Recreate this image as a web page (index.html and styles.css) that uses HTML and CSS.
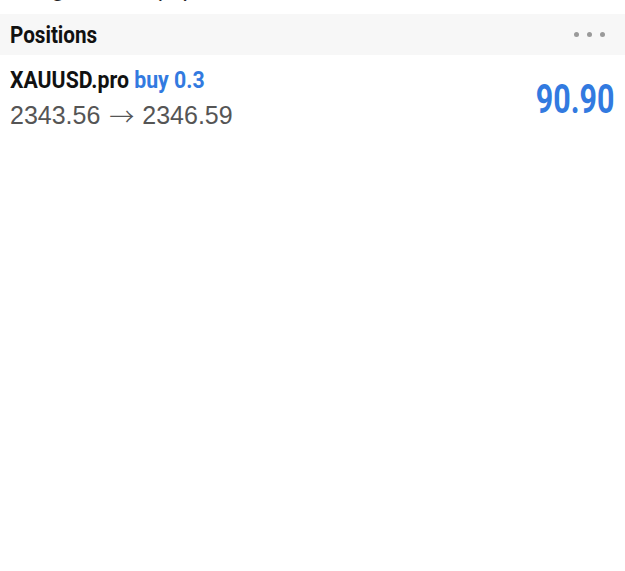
FILE: index.html
```html
<!DOCTYPE html>
<html>
<head>
<meta charset="utf-8">
<link rel="stylesheet" href="styles.css">
</head>
<body>
<div class="top-cut"><div class="top-text">Margin Level (%)</div></div>
<div class="section-header">
  <span class="section-title">Positions</span>
  <span class="more"><i></i><i></i><i></i></span>
</div>
<div class="position">
  <div class="pos-info">
    <div class="pos-title"><span class="cond">XAUUSD.pro <span class="side">buy 0.3</span></span></div>
    <div class="pos-prices">2343.56 <span class="arrow">→</span> 2346.59</div>
  </div>
  <div class="pos-profit"><span class="cond-right">90.90</span></div>
</div>
</body>
</html>
```
FILE: styles.css
```css
html, body {
  margin: 0;
  padding: 0;
  background: #ffffff;
  font-family: "Liberation Sans", Arial, sans-serif;
}
.top-cut {
  height: 14px;
  overflow: hidden;
  padding-left: 10px;
}
.top-text {
  font-size: 24px;
  line-height: 24px;
  margin-top: -24px;
  color: #222;
}
.section-header {
  height: 41px;
  background: #f7f7f7;
  display: flex;
  align-items: center;
  justify-content: space-between;
  padding: 0 20px 0 10px;
}
.section-title,
.pos-title,
.pos-profit {
  font-family: Roboto, sans-serif;
  font-weight: 700;
}
.section-title {
  display: inline-block;
  font-size: 24px;
  color: #111;
  transform: scaleX(0.86);
  transform-origin: left center;
}
.more {
  display: flex;
  gap: 8px;
}
.more i {
  width: 5px;
  height: 5px;
  border-radius: 50%;
  background: #9a9a9a;
}
.position {
  display: flex;
  align-items: center;
  justify-content: space-between;
  padding: 10px 11px 0 10px;
}
.pos-title {
  font-size: 24px;
  color: #111;
  line-height: 30px;
}
.cond {
  display: inline-block;
  transform: scaleX(0.886);
  transform-origin: left center;
}
.side {
  color: #327ae0;
}
.pos-prices {
  font-size: 25px;
  color: #555;
  line-height: 36px;
}
.arrow {
  font-family: "Noto Sans CJK SC", sans-serif;
  font-weight: 300;
  margin: 0 1px 0 2px;
  position: relative;
  top: 2px;
}
.pos-profit {
  font-size: 40px;
  color: #327ae0;
}
.cond-right {
  display: inline-block;
  transform: scaleX(0.76);
  transform-origin: right center;
}
```
